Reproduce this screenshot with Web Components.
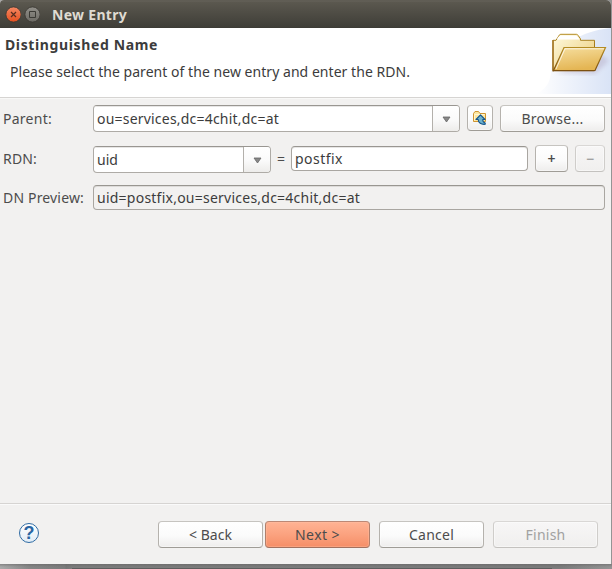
<!DOCTYPE html>
<html lang="en"><head><meta charset="utf-8"><title>New Entry</title>
<style>
html,body{margin:0;width:612px;height:569px;overflow:hidden}
body{font:14px/20px "Noto Sans","Open Sans",sans-serif;color:#4c4c4c;background:#777}
</style></head><body>
<new-entry-dialog></new-entry-dialog>
<script>
const define=(name,html,setup)=>{
  const t=document.createElement('template');t.innerHTML=html;
  customElements.define(name,class extends HTMLElement{
    constructor(){super();this.attachShadow({mode:'open'}).append(t.content.cloneNode(true));}
    connectedCallback(){if(setup)setup(this);}
  });
};

/* Text label whose tracking is adjusted so that it spans the width in its "w" attribute. */
define('fit-text',`<style>:host{display:inline-block;white-space:pre;flex:none}</style><slot></slot>`,el=>{
  const w=+el.getAttribute('w'),n=[...el.textContent].length;
  const c=document.createElement('canvas').getContext('2d'),s=getComputedStyle(el);
  c.font=`${s.fontWeight} ${s.fontSize} ${s.fontFamily}`;
  el.style.letterSpacing=((w-c.measureText(el.textContent).width)/n).toFixed(3)+'px';
  el.style.width=w+'px';
});

define('title-bar',`<style>
:host{display:flex;align-items:center;box-sizing:border-box;height:28px;padding:1px 0 0 5px;background:linear-gradient(#5a574e 0,#66635b 1px,#5b584f 2px,#3f3e38 27px,#3a3934);border-radius:4px 5px 0 0;color:#dfdbd2;font-weight:700}
svg{display:block;margin-right:3px}fit-text{margin-left:9px}
</style>
<svg width="16" height="18" viewBox="0 0 16 18"><defs><linearGradient id="r" x2="0" y2="1"><stop stop-color="#f58863"/><stop offset="1" stop-color="#e5501f"/></linearGradient></defs><circle cx="8.5" cy="8.5" r="7.6" fill="url(#r)" stroke="#383631" stroke-width=".8"/><path d="M6 6l5 5M11 6l-5 5" stroke="#572e20" stroke-width="1.2"/></svg>
<svg width="16" height="18" viewBox="0 0 16 18"><defs><linearGradient id="g" x2="0" y2="1"><stop stop-color="#92908a"/><stop offset="1" stop-color="#6b6963"/></linearGradient></defs><circle cx="8.5" cy="8.5" r="7.6" fill="url(#g)" stroke="#383631" stroke-width=".8"/><path d="M5.5 5.5h6v6h-6z" fill="none" stroke="#3b3a35"/></svg>
<fit-text w="75">New Entry</fit-text>`);

define('folder-art',`<style>:host{display:block;width:111px;height:66px}svg{display:block}</style>
<svg width="111" height="66" viewBox="500 28 111 66">
<defs><linearGradient id="b" x1="0" y1="0" x2="1" y2="0"><stop stop-color="#fff"/><stop offset=".3" stop-color="#f3f6fc"/><stop offset="1" stop-color="#d9e3f6"/></linearGradient>
<linearGradient id="k" x2="1" y2="1"><stop stop-color="#fffbe0"/><stop offset="1" stop-color="#e9c873"/></linearGradient>
<linearGradient id="f" x2=".3" y2="1"><stop stop-color="#f6dfa0"/><stop offset="1" stop-color="#e4b553"/></linearGradient>
<linearGradient id="e" x2="0" y2="1"><stop stop-color="#b48c24"/><stop offset="1" stop-color="#7c5010"/></linearGradient>
<filter id="s"><feGaussianBlur stdDeviation="2"/></filter></defs>
<path d="M536 94C549 88 551 78 551 69C558 44 582 31 611 28V94z" fill="url(#b)"/>
<path d="M556 73L602 55L609 61L595 74z" fill="#9d8aa8" opacity=".3" filter="url(#s)"/>
<path d="M553 71.500V40.500H556L559.500 35Q560 34.500 561 34.500H576.500Q577.500 34.500 578 35.500L580.500 39V40.500H594.500V71H553z" transform="translate(0 -.2)" fill="url(#k)" stroke="url(#e)"/>
<path d="M557 39.500Q558 36 561 35.500H576Q578 36 579.500 39.500z" fill="#fff"/>
<path d="M553 70.500V40" stroke="#a47727" stroke-width="1.500"/>
<path d="M553.500 70.500L564 47.500H605.500L595 70.500z" fill="url(#f)" stroke="url(#e)" stroke-width="1.200"/>
<path d="M556 69L565 48.800H604" fill="none" stroke="#fff" stroke-opacity=".75"/>
</svg>`);

define('wizard-header',`<style>
:host{display:flex;justify-content:space-between;box-sizing:border-box;height:70px;background:#fff;border-bottom:1px solid #d6d4d2;color:#3c3c3c}
.t{display:flex;flex-direction:column;padding:7px 0 0 5px;gap:7px}
b{display:block;height:20px}p{margin:0 0 0 5px;height:20px}
</style><div class="t"><b><slot name="title"></slot></b><p><slot name="message"></slot></p></div><folder-art></folder-art>`);

define('push-button',`<style>
:host{display:flex;align-items:center;justify-content:center;box-sizing:border-box;height:27px;border:1px solid #b9b6b1;border-color:#c6c4c0 #b5b2ad #9f9c96;border-radius:4px;background:linear-gradient(#fff,#fbfbfb 55%,#eeedec);flex:none;color:#4c4c4c;box-shadow:inset 0 0 0 1px #ffffff70}
:host([primary]){border-color:#bc8875 #af7f6c #a2715f;background:linear-gradient(#ffb394,#fba27f 50%,#f58e67);box-shadow:inset 0 0 0 1px #ffc1a565}
:host([disabled]){border-color:#d9d7d5 #cfcdca #c4c2bf;background:linear-gradient(#f7f6f6,#f0efee);color:#a1a1a1}
</style><slot></slot>`);

define('text-field',`<style>
:host{display:flex;align-items:center;box-sizing:border-box;height:25px;padding-left:3px;border:1px solid #a9a6a1;border-top-color:#999691;border-radius:4px;background:#fff;color:#3c3c3c;flex:none;box-shadow:inset 0 1px #e7e6e5}
:host([readonly]){background:#f2f1f0;box-shadow:inset 0 1px #dddbd9}
</style><slot></slot>`);

define('combo-box',`<style>
:host{display:flex;box-sizing:border-box;height:27px;border:1px solid #aeaba6;border-top-color:#999691;border-radius:4px;background:#fff;overflow:hidden;color:#3c3c3c;flex:none}
.v{flex:1;display:flex;align-items:center;padding-left:3px;box-shadow:inset 0 1px #e7e6e5}
.a{width:26px;border-left:1px solid #b3b0ab;background:linear-gradient(#fff,#fafafa 55%,#edecea);display:flex;align-items:center;justify-content:center}
svg{display:block;margin-top:2px}
</style><div class="v"><slot></slot></div><div class="a"><svg width="9" height="7"><path d="M1 1H8L4.500 6z" fill="#888" stroke="#666" stroke-width=".8"/></svg></div>`);

define('parent-icon',`<style>:host{display:block}svg{display:block}</style>
<svg width="16" height="16" viewBox="0 0 16 16"><path d="M1.500 11.500V3.500L3 1.500H6.500L8 3.500H13.500V11.500z" fill="#fde7a0" stroke="#cf9430"/><path d="M2.500 10.500V4.500H12.500" fill="none" stroke="#fff6d2"/><path d="M8.500 4.800L13 9.500H10.700C10.700 11.500 11.500 12.500 13.200 13V14.300C9 14.700 6.300 12.900 6.200 9.500H4z" fill="#6db2cd" stroke="#15558c" stroke-width="1.100" stroke-linejoin="round"/></svg>`);

define('help-icon',`<style>:host{display:flex;align-items:center;justify-content:center;box-sizing:border-box;width:20px;height:20px;border:1px solid #2f6ba3;border-radius:50%;background:linear-gradient(#fff,#e1ecf6);color:#2a65a2;font:700 18px/18px "Liberation Sans",sans-serif}</style><span>?</span>`);

define('form-row',`<style>:host{display:flex;align-items:center;box-sizing:border-box;height:27px;padding-left:3px}.l{width:90px;flex:none}</style><div class="l"><slot name="label"></slot></div><slot></slot>`);

define('entry-form',`<style>
:host{display:block;flex:1;padding-top:7px;box-shadow:inset 0 1px #f8f8f7}
.icon{width:26px;height:26px;margin:0 7px;align-self:flex-start}.browse{width:105px}
.rdn{margin-top:13px;height:28px;align-items:flex-start}.rdn>*{flex:none}
.rdn combo-box,.rdn text-field{margin-top:1px}
.rdn span{font-weight:600}
.preview{margin-top:12px;height:25px}
</style>
<form-row><fit-text slot="label" w="49">Parent:</fit-text><combo-box style="width:367px"><fit-text w="182">ou=services,dc=4chit,dc=at</fit-text></combo-box><push-button class="icon"><parent-icon></parent-icon></push-button><push-button class="browse"><fit-text w="62">Browse...</fit-text></push-button></form-row>
<form-row class="rdn"><fit-text slot="label" w="34" style="margin-top:4px">RDN:</fit-text><combo-box style="width:178px"><fit-text w="21">uid</fit-text></combo-box><fit-text w="9" style="margin:4px 5px 0 6px">=</fit-text><text-field style="width:237px"><fit-text w="48">postfix</fit-text></text-field><push-button style="width:33px;margin:0 7px"><span>+</span></push-button><push-button disabled style="width:30px"><span>−</span></push-button></form-row>
<form-row class="preview"><fit-text slot="label" w="81">DN Preview:</fit-text><text-field readonly style="width:512px"><fit-text w="263">uid=postfix,ou=services,dc=4chit,dc=at</fit-text></text-field></form-row>`);

define('wizard-footer',`<style>
:host{display:flex;align-items:flex-start;box-sizing:border-box;height:61px;border-top:1px solid #d6d4d2;box-shadow:inset 0 1px #fafafa;padding:17px 13px 0 19px}
help-icon{margin:2px auto 0 0}push-button{width:105px}
.n{margin:0 9px 0 2px}.f{margin-left:9px}
</style><help-icon></help-icon><push-button><fit-text w="43">&lt; Back</fit-text></push-button><push-button primary class="n"><fit-text w="45">Next &gt;</fit-text></push-button><push-button><fit-text w="45">Cancel</fit-text></push-button><push-button disabled class="f"><fit-text w="40">Finish</fit-text></push-button>`);

define('new-entry-dialog',`<style>
:host{display:flex;flex-direction:column;width:612px;height:569px;background:linear-gradient(90deg,#aaa 0,#858585 30px,#7b7b7b 65px,#757575 66px,#7c7c7c 72px,#7b7b7b 560px,#949494)}
.w{display:flex;flex-direction:column;width:611px;height:564px;background:#f2f1f0;border-radius:4px 5px 0 0}
.s{height:5px;background:linear-gradient(#62626280,transparent 3px,#5c5c5c00 4px)}
.s::after{content:"";display:block;height:1px;margin-left:72px;width:480px;transform:translateY(4px);background:#5e5e5e}
</style><div class="w"><title-bar></title-bar><wizard-header><fit-text slot="title" w="153">Distinguished Name</fit-text><fit-text slot="message" w="400">Please select the parent of the new entry and enter the RDN.</fit-text></wizard-header><entry-form></entry-form><wizard-footer></wizard-footer></div><div class="s"></div>`);
</script></body></html>
